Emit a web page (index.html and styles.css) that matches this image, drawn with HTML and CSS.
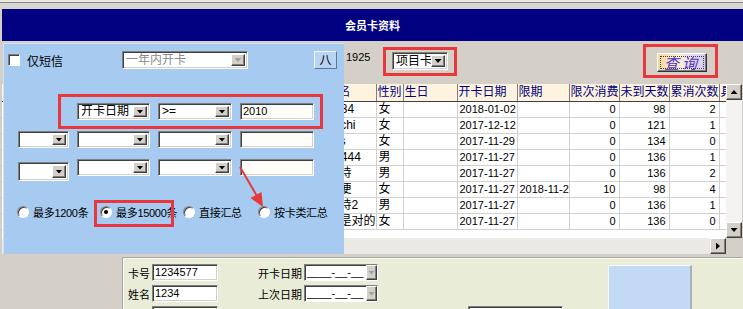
FILE: index.html
```html
<!DOCTYPE html>
<html lang="zh-CN">

<head>
  <meta charset="UTF-8">
  <title>会员卡资料</title>
  <link rel="stylesheet" href="styles.css">
</head>

<body>
  <div class="window">
    <div class="top-strip"></div>
    <div class="title-bar">会员卡资料</div>

    <!-- 查询条 -->
    <div class="toolbar">
      <span class="count">1925</span>
      <div class="combo combo-type">
        <span class="combo-text">项目卡</span>
        <span class="combo-btn"></span>
      </div>
      <button class="query-btn"><span class="focus">查询</span></button>
    </div>

    <!-- 会员卡列表 -->
    <div class="grid-view">
      <div class="grid-body">
        <div class="grid-scroll">
          <table class="grid">
            <colgroup>
              <col style="width: 30px">
              <col style="width: 90px">
              <col style="width: 70px">
              <col style="width: 70px">
              <col style="width: 63px">
              <col style="width: 51px">
              <col style="width: 27px">
              <col style="width: 54px">
              <col style="width: 60px">
              <col style="width: 52px">
              <col style="width: 50px">
              <col style="width: 50px">
              <col style="width: 50px">
              <col style="width: 60px">
            </colgroup>
            <thead>
              <tr>
                <th>序</th><th>卡号</th><th>卡类</th><th>余额</th><th>电话</th>
                <th>姓名</th><th>性别</th><th>生日</th><th>开卡日期</th><th>限期</th>
                <th>限次消费</th><th>未到天数</th><th>累消次数</th><th>具体项目</th>
              </tr>
            </thead>
            <tbody>
              <tr>
                <td>1</td><td>1234577</td><td>项目卡</td><td>0</td><td></td>
                <td>1234</td><td>女</td><td></td><td class="date">2018-01-02</td><td class="date"></td>
                <td class="num">0</td><td class="num">98</td><td class="num">2</td><td></td>
              </tr>
              <tr>
                <td>2</td><td>1234576</td><td>项目卡</td><td>0</td><td></td>
                <td>zhchi</td><td>女</td><td></td><td class="date">2017-12-12</td><td class="date"></td>
                <td class="num">0</td><td class="num">121</td><td class="num">1</td><td></td>
              </tr>
              <tr>
                <td>3</td><td>1234575</td><td>项目卡</td><td>0</td><td></td>
                <td>sss</td><td>女</td><td></td><td class="date">2017-11-29</td><td class="date"></td>
                <td class="num">0</td><td class="num">134</td><td class="num">0</td><td></td>
              </tr>
              <tr>
                <td>4</td><td>1234574</td><td>项目卡</td><td>0</td><td></td>
                <td>13444</td><td>男</td><td></td><td class="date">2017-11-27</td><td class="date"></td>
                <td class="num">0</td><td class="num">136</td><td class="num">1</td><td></td>
              </tr>
              <tr>
                <td>5</td><td>1234573</td><td>项目卡</td><td>0</td><td></td>
                <td>老诗</td><td>男</td><td></td><td class="date">2017-11-27</td><td class="date"></td>
                <td class="num">0</td><td class="num">136</td><td class="num">2</td><td></td>
              </tr>
              <tr>
                <td>6</td><td>1234572</td><td>项目卡</td><td>0</td><td></td>
                <td>方便</td><td>女</td><td></td><td class="date">2017-11-27</td><td class="date">2018-11-27</td>
                <td class="num">10</td><td class="num">98</td><td class="num">4</td><td></td>
              </tr>
              <tr>
                <td>7</td><td>1234571</td><td>项目卡</td><td>0</td><td></td>
                <td>老诗2</td><td>男</td><td></td><td class="date">2017-11-27</td><td class="date"></td>
                <td class="num">0</td><td class="num">136</td><td class="num">1</td><td></td>
              </tr>
              <tr>
                <td>8</td><td>1234570</td><td>项目卡</td><td>0</td><td></td>
                <td>说是对的</td><td>女</td><td></td><td class="date">2017-11-27</td><td class="date"></td>
                <td class="num">0</td><td class="num">136</td><td class="num">0</td><td></td>
              </tr>
            </tbody>
          </table>
        </div>
        <div class="vscroll">
          <span class="scroll-btn arrow-up"></span>
          <span class="vscroll-track"></span>
          <span class="scroll-btn arrow-down"></span>
        </div>
      </div>
      <div class="hscroll">
        <span class="hscroll-track"></span>
        <span class="scroll-btn arrow-right"></span>
        <span class="scroll-corner"></span>
      </div>
    </div>

    <!-- 卡资料 -->
    <div class="card-form">
      <div class="field-col">
        <div class="form-row"><label>卡号</label><span class="text-box">1234577</span></div>
        <div class="form-row"><label>姓名</label><span class="text-box">1234</span></div>
        <div class="form-row"><label></label><span class="text-box"></span></div>
      </div>
      <div class="date-col">
        <div class="form-row">
          <label>开卡日期</label>
          <div class="date-box"><span class="date-mask">____-__-__</span><span class="combo-btn disabled"></span></div>
        </div>
        <div class="form-row">
          <label>上次日期</label>
          <div class="date-box"><span class="date-mask">____-__-__</span><span class="combo-btn disabled"></span></div>
        </div>
      </div>
      <div class="extra-col">
        <span class="text-box wide"></span>
      </div>
      <div class="photo"></div>
    </div>

    <!-- 筛选面板，浮在列表上 -->
    <div class="filter-panel">
      <div class="filter-top">
        <div class="check"><span class="checkbox"></span><span>仅短信</span></div>
        <div class="combo disabled">
          <span class="combo-text">一年内开卡</span>
          <span class="combo-btn disabled"></span>
        </div>
        <button class="collapse-btn">八</button>
      </div>

      <div class="cond-row first">
        <div></div>
        <div class="combo"><span class="combo-text">开卡日期</span><span class="combo-btn"></span></div>
        <div class="combo"><span class="combo-text">&gt;=</span><span class="combo-btn"></span></div>
        <span class="text-box cond">2010</span>
      </div>
      <div class="cond-row">
        <div class="combo"><span class="combo-text"></span><span class="combo-btn"></span></div>
        <div class="combo"><span class="combo-text"></span><span class="combo-btn"></span></div>
        <div class="combo"><span class="combo-text"></span><span class="combo-btn"></span></div>
        <span class="text-box cond"></span>
      </div>
      <div class="cond-row">
        <div class="combo low"><span class="combo-text"></span><span class="combo-btn"></span></div>
        <div class="combo"><span class="combo-text"></span><span class="combo-btn"></span></div>
        <div class="combo"><span class="combo-text"></span><span class="combo-btn"></span></div>
        <span class="text-box cond"></span>
      </div>

      <div class="radio-row">
        <label class="radio-item"><span class="radio"></span>最多1200条</label>
        <label class="radio-item"><span class="radio on"></span>最多15000条</label>
        <label class="radio-item"><span class="radio"></span>直接汇总</label>
        <label class="radio-item"><span class="radio"></span>按卡类汇总</label>
      </div>
    </div>

    <!-- 标注 -->
    <div class="mark mark-cond"></div>
    <div class="mark mark-limit"></div>
    <div class="mark mark-type"></div>
    <div class="mark mark-query"></div>
    <svg class="mark-arrow" width="45" height="60" viewBox="0 0 45 60">
      <line x1="10" y1="12" x2="27" y2="41" stroke="#e8383d" stroke-width="2"/>
      <polygon points="33,52 20.5,43 31.5,37" fill="#e8383d"/>
    </svg>
  </div>
</body>

</html>
```

FILE: styles.css
```css
* {
  margin: 0;
  padding: 0;
  box-sizing: border-box;
}

body {
  font-family: "Liberation Sans", "Noto Sans CJK SC", sans-serif;
  font-size: 12px;
  color: #000;
  background: #d4d0c8;
  overflow: hidden;
}

.window {
  position: relative;
  width: 743px;
  height: 309px;
  overflow: hidden;
  background: #d4d0c8;
}

.top-strip {
  height: 9px;
  background: #d8d6d0;
  border-top: 2px solid #ebe9e5;
  box-shadow: inset 0 1px 0 #8c8a86;
}

.title-bar {
  height: 32px;
  margin-left: 2px;
  background: #000080;
  color: #fff;
  font-size: 11px;
  font-weight: bold;
  display: flex;
  align-items: center;
  justify-content: center;
}

/* 通用控件 */
.combo {
  display: flex;
  height: 18px;
  padding: 1px 2px;
  background: #fff;
  border: 1px solid;
  border-color: #808080 #fff #fff #808080;
  box-shadow: inset 1px 1px 0 #404040, inset -1px -1px 0 #d4d0c8;
}

.combo-text {
  flex: 1;
  padding-left: 1px;
  font-size: 12px;
  line-height: 14px;
  overflow: hidden;
  white-space: nowrap;
}

.combo.disabled .combo-text {
  color: #8c8c8c;
}

.combo-btn {
  width: 14px;
  margin: 1px 0;
  background: #d4d0c8;
  border: 1px solid;
  border-color: #fff #404040 #404040 #fff;
  box-shadow: inset -1px -1px 0 #808080;
  display: flex;
  align-items: center;
  justify-content: center;
}

.combo-btn::after {
  content: "";
  width: 7px;
  height: 4px;
  background: #000;
  clip-path: polygon(0 0, 100% 0, 50% 100%);
}

.combo-btn.disabled::after {
  background: #a0a0a0;
}

.text-box {
  display: block;
  width: 66px;
  height: 17px;
  padding: 1px 2px;
  background: #fff;
  border: 1px solid;
  border-color: #808080 #fff #fff #808080;
  box-shadow: inset 1px 1px 0 #404040, inset -1px -1px 0 #d4d0c8;
  font-size: 11px;
  line-height: 13px;
  white-space: nowrap;
}

/* 查询条 */
.toolbar {
  height: 43px;
  display: flex;
  align-items: flex-start;
}

.count {
  width: 46px;
  margin: 11px 0 0 346px;
  font-size: 11px;
  line-height: 11px;
}

.combo-type {
  width: 56px;
  margin-top: 11px;
}

.query-btn {
  width: 50px;
  height: 19px;
  margin: 12px 36px 0 auto;
  padding: 2px;
  background: linear-gradient(to right, #f6d89c, #fbeeda 45%, #e6d6ee 75%, #d2cdf2);
  border: 1px solid;
  border-color: #fff #303030 #303030 #fff;
  box-shadow: inset -1px -1px 0 #808080;
  font-family: "Noto Sans CJK SC", sans-serif;
  display: flex;
  overflow: hidden;
}

.query-btn .focus {
  flex: 1;
  border: 1px dotted #404040;
  color: #4a36c4;
  font-size: 15px;
  font-style: italic;
  letter-spacing: 3px;
  line-height: 12px;
  text-align: center;
  white-space: nowrap;
}

/* 列表 */
.grid-view {
  height: 170px;
  margin: 0 1px 0 2px;
  display: flex;
  flex-direction: column;
}

.grid-body {
  flex: 1;
  min-height: 0;
  display: flex;
}

.grid-scroll {
  flex: 1;
  overflow: hidden;
  background: #fff;
}

.grid {
  width: 777px;
  table-layout: fixed;
  border-collapse: collapse;
}

.grid th {
  height: 17px;
  padding: 0 0 0 1px;
  background: #fdf3df;
  color: #000080;
  font-weight: normal;
  text-align: left;
  line-height: 16px;
  border-right: 1px solid #808080;
  border-bottom: 1px solid #404040;
  white-space: nowrap;
  overflow: hidden;
}

.grid td {
  height: 16px;
  padding: 0 2px;
  line-height: 15px;
  border-right: 1px solid #d0d0d0;
  border-bottom: 1px solid #d0d0d0;
  white-space: nowrap;
  overflow: hidden;
}

.grid td.date {
  font-size: 11px;
  text-overflow: clip;
}

.grid td.num {
  font-size: 11px;
  text-align: right;
  padding-right: 3px;
}

.vscroll {
  width: 16px;
  display: flex;
  flex-direction: column;
}

.vscroll-track {
  flex: 1;
  background: #f4f3ef;
}

.hscroll {
  height: 16px;
  display: flex;
}

.hscroll-track {
  flex: 1;
  background: #ebe9e4;
}

.scroll-btn {
  width: 16px;
  height: 16px;
  background: #d4d0c8;
  border: 1px solid;
  border-color: #fff #404040 #404040 #fff;
  box-shadow: inset -1px -1px 0 #808080;
  display: flex;
  align-items: center;
  justify-content: center;
}

.scroll-btn::after {
  content: "";
  background: #000;
}

.arrow-up::after {
  width: 7px;
  height: 4px;
  clip-path: polygon(50% 0, 100% 100%, 0 100%);
}

.arrow-down::after {
  width: 7px;
  height: 4px;
  clip-path: polygon(0 0, 100% 0, 50% 100%);
}

.arrow-right::after {
  width: 4px;
  height: 7px;
  clip-path: polygon(0 0, 100% 50%, 0 100%);
}

.scroll-corner {
  width: 16px;
  background: #d4d0c8;
}

/* 卡资料 */
.card-form {
  height: 60px;
  margin: 4px 0 0 123px;
  padding: 5px 0 0 4px;
  background: #e9ecd6;
  border-top: 1px solid #fbfbf4;
  border-left: 1px solid #fbfbf4;
  box-shadow: -1px -1px 0 #a8a69f;
  display: flex;
  align-items: flex-start;
}

.field-col,
.date-col {
  display: flex;
  flex-direction: column;
  gap: 4px;
}

.form-row {
  display: flex;
  align-items: center;
  height: 17px;
}

.form-row label {
  width: 24px;
  font-size: 11px;
}

.date-col {
  margin-left: 39px;
}

.date-col label {
  width: 47px;
  padding-right: 2px;
  text-align: right;
}

.date-box {
  width: 74px;
  height: 17px;
  display: flex;
  background: #fff;
  border: 1px solid;
  border-color: #808080 #fff #fff #808080;
  box-shadow: inset 1px 1px 0 #404040;
  padding: 1px 0 0 2px;
}

.date-mask {
  flex: 1;
  font-size: 11px;
  line-height: 13px;
}

.date-box .combo-btn {
  width: 11px;
  margin: -1px 0 0;
}

.extra-col {
  margin: 42px 0 0 90px;
}

.text-box.wide {
  width: 95px;
}

.photo {
  width: 84px;
  height: 60px;
  margin: 1px 0 0 45px;
  background: #c2daf4;
  border-top: 1px solid #f4f7fb;
  border-left: 1px solid #f4f7fb;
  border-right: 2px solid #a9b0b8;
}

/* 筛选面板 */
.filter-panel {
  position: absolute;
  left: 3px;
  top: 43px;
  width: 341px;
  height: 211px;
  background: #a6caf0;
  box-shadow: inset 1px 1px 0 #d2e3f8;
  font-size: 11px;
}

.filter-top {
  display: grid;
  grid-template-columns: 114px 126px 1fr;
  align-items: center;
  height: 18px;
  margin-top: 8px;
  padding: 0 7px 0 5px;
}

.check {
  display: flex;
  align-items: center;
  gap: 7px;
  font-size: 12px;
}

.checkbox {
  width: 12px;
  height: 12px;
  background: #fff;
  border: 1px solid;
  border-color: #808080 #fff #fff #808080;
  box-shadow: inset 1px 1px 0 #404040;
}

.collapse-btn {
  justify-self: end;
  width: 23px;
  height: 18px;
  background: #b9d3f1;
  border: 1px solid;
  border-color: #eef4fc #5d7894 #5d7894 #eef4fc;
  font-family: "Noto Sans CJK SC", sans-serif;
  font-size: 12px;
  line-height: 14px;
}

.cond-row {
  display: grid;
  grid-template-columns: 51px 73px 74px 74px;
  grid-template-rows: 17px;
  column-gap: 8px;
  height: 17px;
  margin-top: 11px;
  padding-left: 15px;
}

.cond-row.first {
  margin-top: 34px;
}

.cond-row:last-of-type {
  margin-top: 12px;
}

.cond-row .combo {
  height: 17px;
}

.cond-row .combo-text {
  line-height: 13px;
}

.cond-row .combo.low {
  height: 19px;
  margin-top: 3px;
}

.text-box.cond {
  width: 74px;
  background: #fffdf8;
}

.radio-row {
  display: grid;
  grid-template-columns: 83px 83px 75px auto;
  align-items: center;
  height: 14px;
  margin-top: 28px;
  padding-left: 14px;
}

.radio-item {
  display: flex;
  align-items: center;
  gap: 4px;
  white-space: nowrap;
  letter-spacing: -0.3px;
}

.radio {
  position: relative;
  flex: none;
  width: 12px;
  height: 12px;
  border-radius: 50%;
  background: #fff;
  border: 1px solid;
  border-color: #808080 #fff #fff #808080;
  box-shadow: inset 1px 1px 0 #404040;
}

.radio.on::after {
  content: "";
  position: absolute;
  left: 3px;
  top: 3px;
  width: 4px;
  height: 4px;
  border-radius: 50%;
  background: #000;
}

/* 红色标注 */
.mark {
  position: absolute;
  border: 3px solid #e8383d;
  pointer-events: none;
}

.mark-cond {
  left: 58px;
  top: 94px;
  width: 265px;
  height: 35px;
}

.mark-limit {
  left: 94px;
  top: 200px;
  width: 80px;
  height: 27px;
}

.mark-type {
  left: 383px;
  top: 47px;
  width: 74px;
  height: 29px;
}

.mark-query {
  left: 643px;
  top: 44px;
  width: 75px;
  height: 34px;
}

.mark-arrow {
  position: absolute;
  left: 230px;
  top: 155px;
}
```
